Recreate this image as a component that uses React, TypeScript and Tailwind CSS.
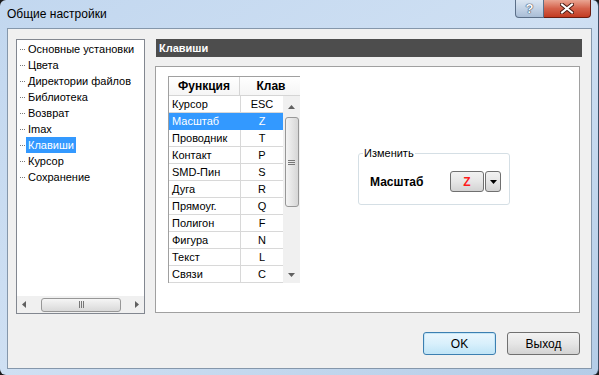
import React from "react";

const treeItems = [
  "Основные установки",
  "Цвета",
  "Директории файлов",
  "Библиотека",
  "Возврат",
  "Imax",
  "Клавиши",
  "Курсор",
  "Сохранение",
];

const keyRows: [string, string][] = [
  ["Курсор", "ESC"],
  ["Масштаб", "Z"],
  ["Проводник", "T"],
  ["Контакт", "P"],
  ["SMD-Пин", "S"],
  ["Дуга", "R"],
  ["Прямоуг.", "Q"],
  ["Полигон", "F"],
  ["Фигура", "N"],
  ["Текст", "L"],
  ["Связи", "C"],
];

function Arrow({ dir }: { dir: "up" | "down" | "left" | "right" }) {
  const pts = {
    up: "0,4 7,4 3.5,0",
    down: "0,0 7,0 3.5,4",
    left: "4,0 4,7 0,3.5",
    right: "0,0 0,7 4,3.5",
  }[dir];
  const vert = dir === "up" || dir === "down";
  return (
    <svg width={vert ? 7 : 4} height={vert ? 4 : 7} viewBox={vert ? "0 0 7 4" : "0 0 4 7"}>
      <polygon points={pts} fill="#606060" />
    </svg>
  );
}

function TitleButtons() {
  return (
    <div className="absolute right-[7px] top-0 flex">
      <div className="w-[29px] h-[18px] rounded-bl-[4px] border border-t-0 border-[#5b6f88] bg-gradient-to-b from-[#dbe6f2] via-[#c3d3e6] to-[#a9bdd6] flex items-center justify-center">
        <span className="text-[13px] font-bold leading-none text-white [text-shadow:0_0_1px_#33455e,0_0_1px_#33455e,0_0_1px_#33455e] font-['Liberation_Sans',sans-serif]">
          ?
        </span>
      </div>
      <div className="w-[47px] h-[18px] rounded-br-[4px] border border-t-0 border-l-0 border-[#6a1c10] bg-gradient-to-b from-[#e9a593] via-[#d4614a] to-[#c23a20] flex items-center justify-center">
        <svg width="14" height="11" viewBox="0 0 14 11">
          <path d="M2 1.5 L12 9.5 M12 1.5 L2 9.5" stroke="#4a1a12" strokeWidth="4" strokeLinecap="square" />
          <path d="M2 1.5 L12 9.5 M12 1.5 L2 9.5" stroke="#ffffff" strokeWidth="2" strokeLinecap="square" />
        </svg>
      </div>
    </div>
  );
}

function TreePanel() {
  return (
    <div className="w-[129px] h-[275px] border border-[#828790] bg-white flex flex-col">
      <div className="flex-1 pt-px">
        {treeItems.map((t) => {
          const sel = t === "Клавиши";
          return (
            <div key={t} className="h-[16px] flex items-center pl-[3px]">
              <span className="w-[6px] h-px bg-[repeating-linear-gradient(90deg,#7a7a7a_0_1px,transparent_1px_2px)]" />
              <span
                className={`px-[2px] h-[16px] leading-[16px] whitespace-nowrap ${
                  sel ? "bg-[#3399ff] text-white" : "text-black"
                }`}
              >
                {t}
              </span>
            </div>
          );
        })}
      </div>
      <div className="h-[17px] bg-[#f0f0f0] flex items-center">
        <div className="w-[17px] flex justify-center">
          <Arrow dir="left" />
        </div>
        <div className="flex-1 flex items-center pl-[10px] pr-[9px]">
          <div className="w-[80px] h-[14px] rounded-[3px] border border-[#979797] bg-gradient-to-b from-[#f5f5f5] to-[#d9d9d9] flex items-center justify-center gap-[1px]">
            <span className="w-px h-[7px] bg-[#777]" />
            <span className="w-px h-[7px] bg-[#777]" />
            <span className="w-px h-[7px] bg-[#777]" />
          </div>
        </div>
        <div className="w-[17px] flex justify-center">
          <Arrow dir="right" />
        </div>
      </div>
    </div>
  );
}

function KeyTable() {
  return (
    <div className="w-[132px] border-l border-t border-[#a0a0a0]">
      <div className="h-[19px] flex border-b border-[#d5d5d5] bg-gradient-to-b from-white to-[#f5f5f5] font-bold text-[12px]">
        <div className="w-[71px] border-r border-[#d5d5d5] flex items-center justify-center">Функция</div>
        <div className="flex-1 flex items-center justify-center pl-[2px]">Клав</div>
      </div>
      <div className="flex">
        <div className="w-[114px]">
          {keyRows.map(([fn, key]) => {
            const sel = fn === "Масштаб";
            return (
              <div
                key={fn}
                className={`h-[17px] flex border-b ${
                  sel ? "bg-[#3399ff] text-white border-[#3399ff]" : "border-[#d8d8d8]"
                }`}
              >
                <div className={`w-[72px] pl-[3px] leading-[16px] border-r ${sel ? "border-[#3399ff]" : "border-[#d8d8d8]"}`}>
                  {fn}
                </div>
                <div className="flex-1 text-center leading-[16px]">{key}</div>
              </div>
            );
          })}
        </div>
        <div className="w-[17px] h-[187px] bg-[#f0f0f0] flex flex-col items-center">
          <div className="h-[21px] flex items-center">
            <Arrow dir="up" />
          </div>
          <div className="w-[14px] h-[90px] rounded-[3px] border border-[#979797] bg-gradient-to-r from-[#f4f4f4] to-[#d6d6d6] flex flex-col items-center justify-center gap-[1px]">
            <span className="w-[7px] h-px bg-[#777]" />
            <span className="w-[7px] h-px bg-[#777]" />
            <span className="w-[7px] h-px bg-[#777]" />
          </div>
          <div className="flex-1" />
          <div className="h-[17px] flex items-center">
            <Arrow dir="down" />
          </div>
        </div>
      </div>
    </div>
  );
}

function ChangeGroup() {
  return (
    <div className="relative w-[152px] h-[52px] mt-[77px] ml-[58px] rounded-[3px] border border-[#d5dfe5]">
      <span className="absolute left-[4px] -top-[8px] px-px bg-white leading-[14px]">Изменить</span>
      <div className="flex items-center pl-[11px] pt-[17px]">
        <span className="font-bold text-[12px] w-[80px]">Масштаб</span>
        <div className="w-[34px] h-[21px] rounded-[3px] border border-[#707070] bg-gradient-to-b from-[#f2f2f2] via-[#e6e6e6] to-[#d3d3d3] flex items-center justify-center">
          <span className="text-[#ff1a1a] font-bold text-[12px]">Z</span>
        </div>
        <div className="ml-px w-[16px] h-[21px] rounded-[3px] border border-[#707070] bg-gradient-to-b from-[#f2f2f2] via-[#e6e6e6] to-[#d3d3d3] flex items-center justify-center">
          <svg width="7" height="4" viewBox="0 0 7 4">
            <polygon points="0,0 7,0 3.5,4" fill="#000" />
          </svg>
        </div>
      </div>
    </div>
  );
}

export default function App() {
  return (
    <div className="w-[599px] h-[375px] bg-[#1a1a1a] font-['Liberation_Sans',Arial,sans-serif] text-[11px] text-black">
      <div className="relative w-[599px] h-[375px] rounded-[6px] border-r border-[#3d4f66] bg-gradient-to-br from-[#c2d7ef] via-[#cfe0f3] to-[#b4cce7] pt-[28px] pl-[7px] pr-[6px] pb-[6px]">
        <div className="absolute left-[7px] top-[6px] text-[12px] leading-[16px] text-black">Общие настройки</div>
        <TitleButtons />
        <div className="w-[585px] h-[341px] border border-[#8597ab] bg-[#f0f0f0] flex flex-col">
          <div className="flex pl-[8px] pt-[10px]">
            <TreePanel />
            <div className="ml-[10px] flex flex-col">
              <div className="ml-px w-[426px] h-[18px] bg-[#4d4d4d] text-white font-bold leading-[18px] pl-[3px]">
                Клавиши
              </div>
              <div className="mt-[9px] w-[425px] h-[247px] border border-[#a0a0a0] bg-white flex items-start pl-[12px] pt-[9px]">
                <KeyTable />
                <ChangeGroup />
              </div>
            </div>
          </div>
          <div className="flex justify-end gap-[11px] pr-[11px] mt-[18px]">
            <button className="w-[73px] h-[23px] rounded-[3px] border border-[#3c7fb1] bg-gradient-to-b from-[#eaf6fd] via-[#d9f0fc] to-[#bfe4f7] text-[12px] shadow-[inset_0_0_0_1px_#c4e5f6]">
              OK
            </button>
            <button className="w-[73px] h-[23px] rounded-[3px] border border-[#707070] bg-gradient-to-b from-[#f2f2f2] via-[#e6e6e6] to-[#d3d3d3] text-[12px]">
              Выход
            </button>
          </div>
        </div>
      </div>
    </div>
  );
}
